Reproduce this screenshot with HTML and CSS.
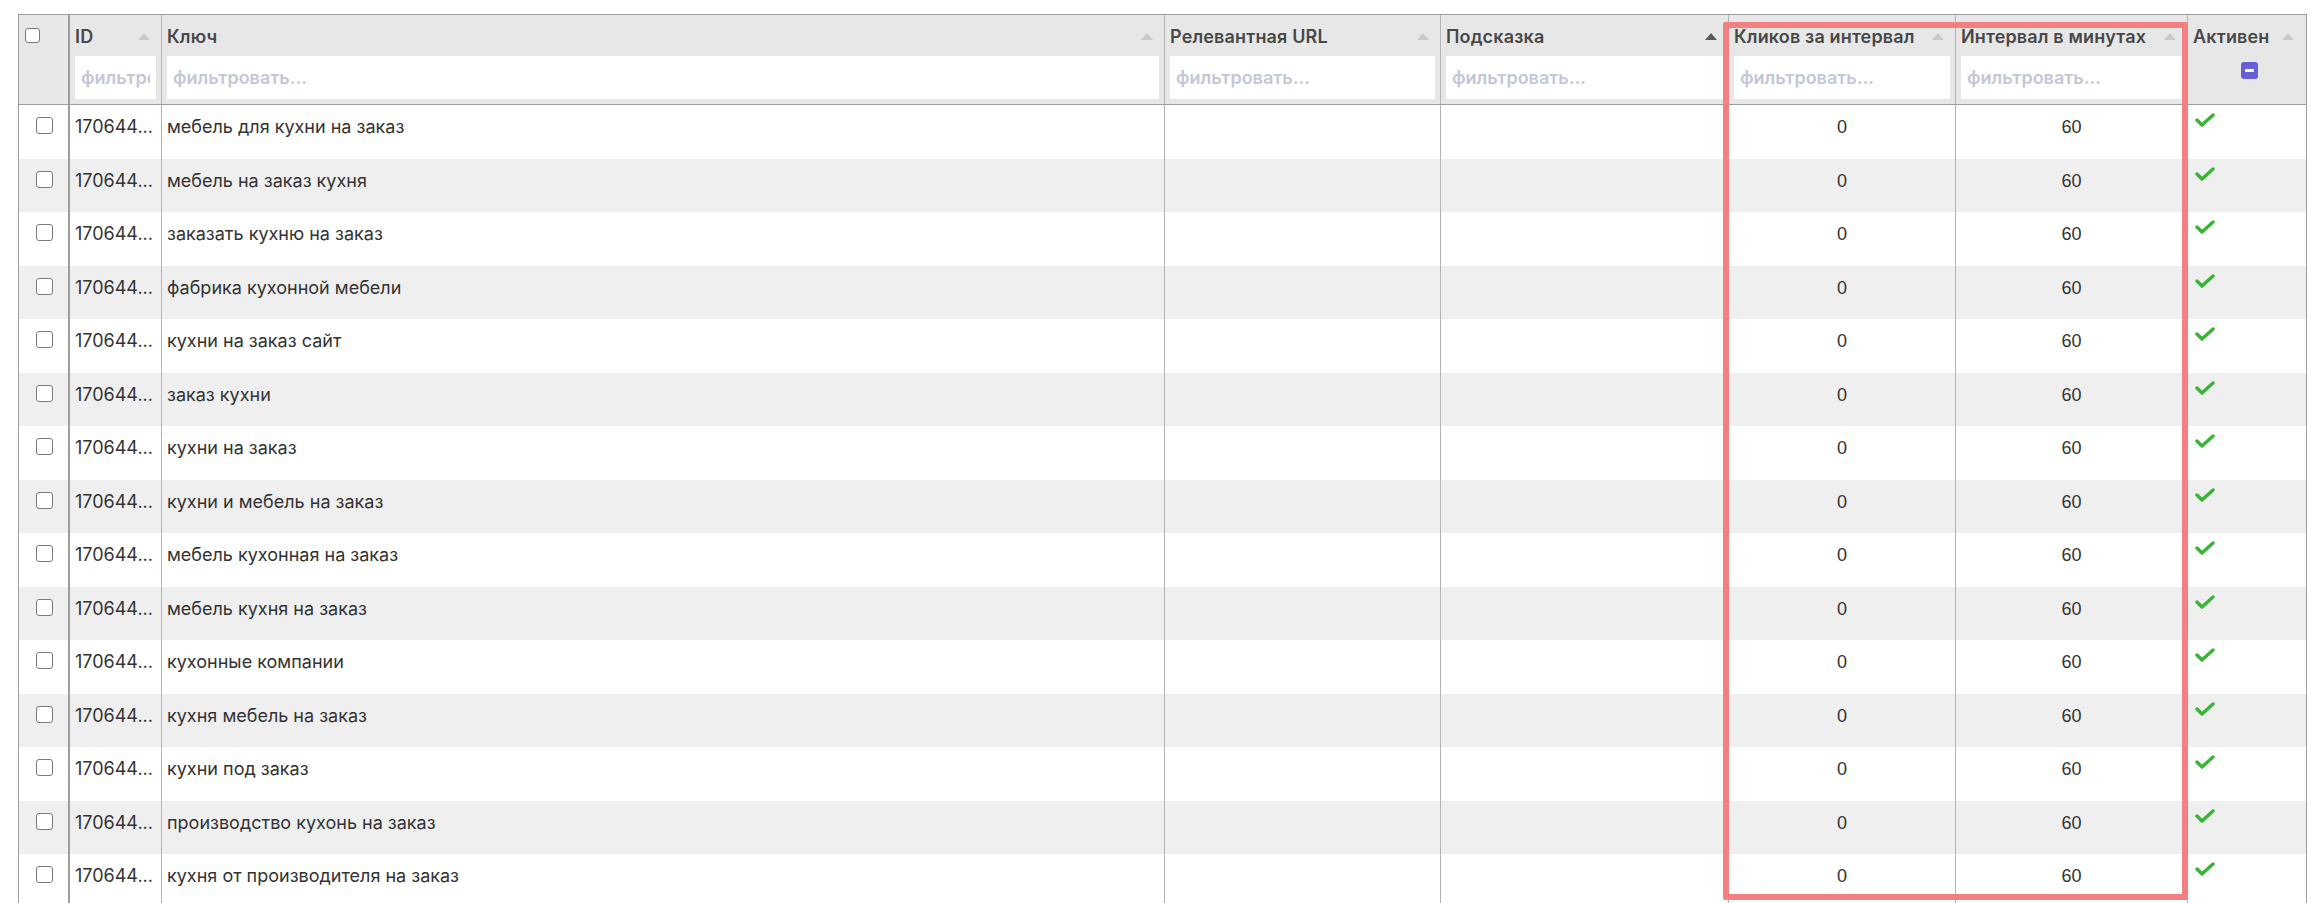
FILE: index.html
```html
<!DOCTYPE html>
<html lang="ru">
<head>
<meta charset="utf-8">
<title>Ключи</title>
<link rel="stylesheet" href="styles.css">
</head>
<body>
<div class="page">
  <div class="grid">
    <div class="row head">
      <div class="cell c-cb"><span class="cbox cbox-head"></span></div>
      <div class="cell"><div class="title"><span>ID</span><span class="sort"></span></div><input class="filter" placeholder="фильтровать..."></div>
      <div class="cell"><div class="title"><span>Ключ</span><span class="sort"></span></div><input class="filter" placeholder="фильтровать..."></div>
      <div class="cell"><div class="title"><span>Релевантная URL</span><span class="sort"></span></div><input class="filter" placeholder="фильтровать..."></div>
      <div class="cell"><div class="title"><span>Подсказка</span><span class="sort active"></span></div><input class="filter" placeholder="фильтровать..."></div>
      <div class="cell"><div class="title"><span>Кликов за интервал</span><span class="sort"></span></div><input class="filter" placeholder="фильтровать..."></div>
      <div class="cell"><div class="title"><span>Интервал в минутах</span><span class="sort"></span></div><input class="filter" placeholder="фильтровать..."></div>
      <div class="cell last"><div class="title"><span>Активен</span><span class="sort"></span></div><div class="tri"><span class="minus"></span></div></div>
    </div>
    <div id="body"></div>
  </div>
  <div class="highlight"></div>
</div>
<script src="app.js"></script>
</body>
</html>
```

FILE: styles.css
```css
* { box-sizing: border-box; }
html, body { margin: 0; padding: 0; background: #fff; }
body { font-family: Inter, "Noto Sans", sans-serif; color: #333; overflow: hidden; height: 903px; }
.page { position: relative; padding: 14px 0 0 18px; }
.grid { width: 2289px; border: 1px solid #9d9d9d; border-bottom: none; }
.row { display: grid; grid-template-columns: 51px 92px 1003px 276px 288px 227px 232px 117px; }
.head { background: #e7e7e7; border-bottom: 1px solid #9d9d9d; height: 90px; }
.cell { border-right: 1px solid #b4b4b4; padding: 0 5px; min-width: 0; }
.c-cb { border-right: 2px solid #9d9d9d; }
.cell.last { border-right: none; }
.head .c-cb { padding: 13px 0 0 6px; }
.title { display: flex; align-items: center; justify-content: space-between; height: 41px; font-size: 18px; letter-spacing: 0.15px; font-weight: 600; color: #484848; white-space: nowrap; padding-top: 2px; }
.sort { width: 0; height: 0; border-left: 6px solid transparent; border-right: 6px solid transparent; border-bottom: 7px solid #cacaca; margin-right: 6px; flex: none; }
.sort.active { border-bottom-color: #5a5a5a; }
.filter { display: block; width: 100%; height: 43px; border: none; outline: none; background: #fff; padding: 0 6px; font-family: Inter, sans-serif; font-size: 18px; font-weight: 600; color: #333; }
.filter::placeholder { color: #c4c7d6; opacity: 1; }
.tri { display: flex; justify-content: center; padding: 6px 0 0 6px; }
.minus { width: 17px; height: 17px; border-radius: 3px; background: #665fd6; position: relative; }
.minus::after { content: ""; position: absolute; left: 4px; right: 4px; top: 7px; height: 3px; border-radius: 1px; background: #fff; }
.cbox { display: block; width: 16px; height: 16px; border: 1px solid #7a7a7a; border-radius: 3px; background: #fff; }
.cbox-head { width: 15px; height: 15px; }
.body-row { height: 53.5px; font-size: 18px; line-height: 24px; }
.body-row:nth-child(even) { background: #efefef; }
.body-row .cell { padding-top: 10px; white-space: nowrap; overflow: hidden; }
.body-row .c-cb { padding-top: 12px; display: flex; justify-content: center; align-items: flex-start; }
.body-row .c-cb .cbox { width: 17px; height: 17px; margin-left: 1px; }
.num { text-align: center; font-family: "Liberation Sans", Arial, sans-serif; font-size: 18px; }
.ok { padding-top: 8px !important; padding-left: 7px !important; }
.ok svg { display: block; }
.highlight { position: absolute; left: 1723px; top: 22px; width: 465px; height: 878px; border: 6px solid #f37f81; border-radius: 2px; pointer-events: none; }
```

FILE: app.js
```js
const keys = [
  "мебель для кухни на заказ",
  "мебель на заказ кухня",
  "заказать кухню на заказ",
  "фабрика кухонной мебели",
  "кухни на заказ сайт",
  "заказ кухни",
  "кухни на заказ",
  "кухни и мебель на заказ",
  "мебель кухонная на заказ",
  "мебель кухня на заказ",
  "кухонные компании",
  "кухня мебель на заказ",
  "кухни под заказ",
  "производство кухонь на заказ",
  "кухня от производителя на заказ"
];
const body = document.getElementById("body");
const check = '<svg width="20" height="14" viewBox="0 0 20 14"><polyline points="2,7 7,12 18,2" fill="none" stroke="#36b536" stroke-width="3.4" stroke-linecap="round" stroke-linejoin="round"/></svg>';
body.innerHTML = keys.map(k =>
  '<div class="row body-row">' +
  '<div class="cell c-cb"><span class="cbox"></span></div>' +
  '<div class="cell">170644...</div>' +
  '<div class="cell">' + k + '</div>' +
  '<div class="cell"></div>' +
  '<div class="cell"></div>' +
  '<div class="cell num">0</div>' +
  '<div class="cell num">60</div>' +
  '<div class="cell last ok">' + check + '</div>' +
  '</div>'
).join("");
```
